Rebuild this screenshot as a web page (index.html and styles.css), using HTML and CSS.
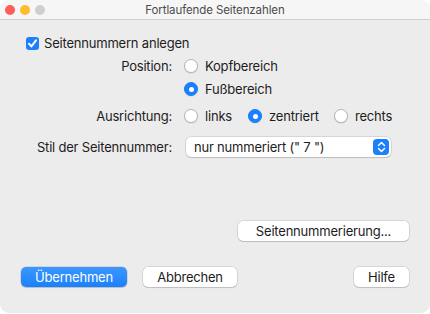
FILE: index.html
```html
<!DOCTYPE html>
<html lang="de">
<head>
    <meta charset="UTF-8">
    <title>Fortlaufende Seitenzahlen</title>
    <link rel="stylesheet" href="styles.css">
</head>
<body>

<div class="window">
    <div class="titlebar">
        <div class="lights">
            <span class="light red"></span>
            <span class="light yellow"></span>
            <span class="light gray"></span>
        </div>
        <div class="title">Fortlaufende Seitenzahlen</div>
    </div>

    <div class="content">
        <label class="check-row">
            <span class="checkbox">
                <svg width="11" height="11" viewBox="0 0 11 11"><path d="M2 5.8 L4.4 8.4 L9 2.4" fill="none" stroke="#fff" stroke-width="2" stroke-linecap="round" stroke-linejoin="round"/></svg>
            </span>
            Seitennummern anlegen
        </label>

        <div class="row">
            <div class="label">Position:</div>
            <div class="controls">
                <span class="option"><span class="radio"></span>Kopfbereich</span>
            </div>
        </div>
        <div class="row">
            <div class="label"></div>
            <div class="controls">
                <span class="option"><span class="radio on"></span>Fußbereich</span>
            </div>
        </div>
        <div class="row row-align">
            <div class="label">Ausrichtung:</div>
            <div class="controls">
                <span class="option opt-links"><span class="radio"></span>links</span>
                <span class="option opt-center"><span class="radio on"></span>zentriert</span>
                <span class="option"><span class="radio"></span>rechts</span>
            </div>
        </div>
        <div class="row row-style">
            <div class="label">Stil der Seitennummer:</div>
            <div class="controls">
                <div class="popup">
                    <span>nur nummeriert (" 7 ")</span>
                    <span class="popup-arrows">
                        <svg width="9" height="12" viewBox="0 0 9 12"><path d="M1.5 4.5 L4.5 1.5 L7.5 4.5 M1.5 7.5 L4.5 10.5 L7.5 7.5" fill="none" stroke="#fff" stroke-width="1.5" stroke-linecap="round" stroke-linejoin="round"/></svg>
                    </span>
                </div>
            </div>
        </div>

        <div class="numbering">
            <button class="btn btn-numbering">Seitennummerierung...</button>
        </div>

        <div class="footer">
            <button class="btn btn-primary">Übernehmen</button>
            <button class="btn btn-cancel">Abbrechen</button>
            <button class="btn btn-help">Hilfe</button>
        </div>
    </div>
</div>

</body>
</html>
```

FILE: styles.css
```css
body {
    margin: 0;
    padding: 0;
    background-color: #fff;
    font-family: Inter, "Liberation Sans", Arial, sans-serif;
    font-size: 13px;
    letter-spacing: -0.2px;
    color: #1d1d1d;
}
.window {
    width: 430px;
    height: 313px;
    background-color: #ececec;
    border-radius: 9px;
    overflow: hidden;
    display: flex;
    flex-direction: column;
}

.titlebar {
    height: 19px;
    background-color: #f6f6f6;
    border-bottom: 1px solid #cfcfcf;
    position: relative;
    display: flex;
    align-items: center;
    justify-content: center;
}
.lights {
    position: absolute;
    left: 5px;
    top: 5px;
    display: flex;
    gap: 5px;
}
.light {
    width: 10px;
    height: 10px;
    border-radius: 50%;
    display: block;
}
.light.red { background-color: #fd5f57; }
.light.yellow { background-color: #febc2e; }
.light.gray { background-color: #cfcfcf; }
.title {
    color: #4c4c4c;
    font-size: 11.5px;
    letter-spacing: -0.1px;
    padding-top: 1px;
}

.content {
    flex: 1;
    padding-top: 12px;
    display: flex;
    flex-direction: column;
}
.check-row {
    height: 22px;
    display: flex;
    align-items: center;
    gap: 5px;
    padding-left: 26px;
}
.checkbox {
    width: 13px;
    height: 13px;
    border-radius: 3px;
    background-color: #1a80fb;
    display: flex;
    align-items: center;
    justify-content: center;
}

.row {
    height: 22px;
    display: grid;
    grid-template-columns: 172px 1fr;
    column-gap: 12px;
    align-items: center;
    margin-top: 1px;
}
.row-align {
    margin-top: 5px;
}
.row-style {
    margin-top: 9px;
}
.label {
    text-align: right;
}
.controls {
    display: flex;
    align-items: center;
}
.option {
    display: flex;
    align-items: center;
    gap: 7px;
}
.opt-links {
    width: 64px;
}
.opt-center {
    width: 86px;
}
.radio {
    width: 12px;
    height: 12px;
    border-radius: 50%;
    background-color: #fff;
    border: 0.5px solid #b5b5b5;
    box-shadow: 0 0.5px 1px rgba(0, 0, 0, 0.15);
    display: block;
}
.radio.on {
    background-color: #1a80fb;
    border-color: #1a80fb;
    position: relative;
}
.radio.on::after {
    content: "";
    position: absolute;
    left: 3.5px;
    top: 3.5px;
    width: 5px;
    height: 5px;
    border-radius: 50%;
    background-color: #fff;
}

.popup {
    margin-left: 2px;
    width: 205px;
    height: 20px;
    box-sizing: border-box;
    background-color: #fff;
    border-radius: 5px;
    box-shadow: 0 0 0 0.5px rgba(0, 0, 0, 0.18), 0 1px 1px rgba(0, 0, 0, 0.12);
    display: flex;
    align-items: center;
    justify-content: space-between;
    padding: 0 2px 0 8px;
}
.popup-arrows {
    width: 16px;
    height: 16px;
    border-radius: 4px;
    background-color: #1a80fb;
    display: flex;
    align-items: center;
    justify-content: center;
}

.numbering {
    margin-top: 63px;
    display: flex;
    justify-content: flex-end;
    padding-right: 21px;
}
.btn {
    font-family: inherit;
    font-size: 13px;
    letter-spacing: -0.2px;
    color: #1d1d1d;
    height: 20px;
    padding: 0;
    border: none;
    border-radius: 5px;
    background-color: #fff;
    box-shadow: 0 0 0 0.5px rgba(0, 0, 0, 0.18), 0 1px 1px rgba(0, 0, 0, 0.12);
}
.btn-numbering {
    width: 171px;
}
.footer {
    margin-top: 26px;
    display: flex;
    align-items: center;
    padding: 0 21px;
}
.btn-primary {
    width: 106px;
    color: #fff;
    background: linear-gradient(#3b97fd, #1a80fb);
}
.btn-cancel {
    width: 94px;
    margin-left: 16px;
}
.btn-help {
    width: 55px;
    margin-left: auto;
}
```
